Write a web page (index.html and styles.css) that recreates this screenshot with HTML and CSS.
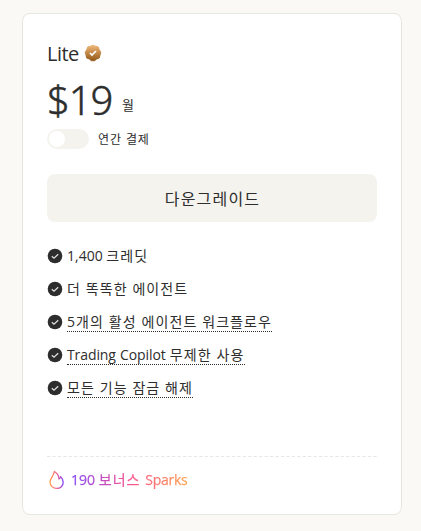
FILE: index.html
```html
<!DOCTYPE html>
<html lang="ko">
<head>
<meta charset="utf-8">
<title>Lite</title>
<link rel="stylesheet" href="styles.css">
</head>
<body>
<svg width="0" height="0" class="defs" aria-hidden="true">
  <defs>
    <linearGradient id="bronze" x1="0" y1="0" x2="0" y2="1"><stop offset="0" stop-color="#f0b777"/><stop offset="1" stop-color="#925817"/></linearGradient>
    <linearGradient id="flame" x1="0" y1="0" x2="1" y2="0"><stop offset="0" stop-color="#ffa04d"/><stop offset=".5" stop-color="#f85c88"/><stop offset="1" stop-color="#8348f6"/></linearGradient>
    <symbol id="check" viewBox="0 0 16 16"><circle cx="8" cy="8" r="7.3" fill="#2d2d2d"/><path d="M4.8 8.2 7 10.2 11.2 6.2" fill="none" stroke="#e4e4e4" stroke-width="1.2"/></symbol>
  </defs>
</svg>
<main class="card">
  <header class="plan">
    <h1 class="name">Lite</h1>
    <svg class="badge" viewBox="0 0 18 18"><path fill="url(#bronze)" stroke="url(#bronze)" stroke-width="1" stroke-linejoin="round" d="M9 1.2 11.5 2.2 14.3 2.9 15.3 5.8 16.8 8.3 16 11 15.4 13.9 12.7 15 10.5 16.7 7.5 16.7 5.3 15 2.6 13.9 2 11 1.2 8.3 2.7 5.8 3.7 2.9 6.5 2.2Z"/><path d="M6 9 8 11 12 7" fill="none" stroke="#fff" stroke-width="1.7"/></svg>
  </header>
  <div class="price"><span class="amount">$19</span><span class="period">월</span></div>
  <div class="billing"><span class="toggle"></span><span class="yearly">연간 결제</span></div>
  <button class="action">다운그레이드</button>
  <ul class="features">
    <li><svg class="tick"><use href="#check"/></svg><span class="text">1,400 <span class="ko">크레딧</span></span></li>
    <li><svg class="tick"><use href="#check"/></svg><span class="text ko">더 똑똑한 에이전트</span></li>
    <li><svg class="tick"><use href="#check"/></svg><span class="text ko hint">5개의 활성 에이전트 워크플로우</span></li>
    <li><svg class="tick"><use href="#check"/></svg><span class="text hint"><span class="latin">Trading Copilot </span><span class="ko">무제한 사용</span></span></li>
    <li><svg class="tick"><use href="#check"/></svg><span class="text ko hint">모든 기능 잠금 해제</span></li>
  </ul>
  <svg class="divider" viewBox="0 0 330 1"><path d="M0 .5H330" stroke="#e6e6e4" stroke-dasharray="3.2 2.24"/></svg>
  <footer class="bonus">
    <svg class="fire" viewBox="0 0 18 20"><path d="M6.3 1.5C9.2 3 10.8 5.4 11 9 12 8.6 12.5 7.8 12.6 6.6 14.3 8.3 15.2 10.2 15.2 12.2 15.2 15.9 12.4 18.4 8.8 18.4 5 18.4 2 15.8 2 12 2 8.5 5.6 6.5 6.3 1.5Z" fill="none" stroke="url(#flame)" stroke-width="1.3" stroke-linejoin="round"/></svg>
    <span class="sparks">190 <span class="ko">보너스 </span><span class="name-en">Sparks</span></span>
  </footer>
</main>
</body>
</html>
```
FILE: styles.css
```css
* { box-sizing: border-box; }
body {
  margin: 0;
  padding: 13px 19px 16px 22px;
  height: 531px;
  overflow: hidden;
  background: #faf9f5;
  color: #2d2d2d;
  font-family: "Open Sans", "Noto Sans CJK KR", sans-serif;
  font-size: 14px;
  white-space: nowrap;
}
.defs { position: absolute; }
.card {
  height: 502px;
  padding: 27px 24px 0;
  border: 1px solid #e6e6e0;
  border-radius: 8px;
  background: #fff;
}
.plan { display: flex; height: 26px; align-items: center; gap: 6px; }
.name { width: 31px; margin: 0; font-size: 20px; font-weight: 400; line-height: 26px; letter-spacing: -.5px; }
.badge { width: 18px; height: 18px; margin-top: -2px; }
.price { display: flex; height: 60px; line-height: 66px; }
.amount {
  width: 75px;
  font-family: "Noto Sans", sans-serif;
  font-size: 40px;
  font-weight: 300;
  letter-spacing: -1.1px;
  -webkit-text-stroke: .5px #2d2d2d;
}
.period { padding-top: 28px; font-size: 13px; line-height: 20px; }
.billing { display: flex; height: 20px; margin-top: 2px; align-items: center; gap: 9px; }
.toggle { width: 42px; height: 20px; padding: 2px; border-radius: 10px; background: #f4f3ee; }
.toggle::before { content: ""; display: block; width: 16px; height: 16px; border-radius: 50%; background: #fff; }
.yearly { margin-top: 1px; font-size: 12px; line-height: 20px; letter-spacing: .9px; }
.action {
  display: block;
  width: 330px;
  height: 48px;
  margin-top: 25px;
  padding: 0 0 0 1px;
  border: 0;
  border-radius: 8px;
  background: #f4f3ee;
  color: inherit;
  font: 16px/46px "Noto Sans CJK KR", sans-serif;
  letter-spacing: 1.2px;
}
.features { height: 165px; margin: 17px 0 0; padding: 0; list-style: none; }
.features li { display: flex; height: 33px; align-items: center; gap: 4px; }
.tick { width: 16px; height: 16px; }
.text { height: 20px; line-height: 20px; }
.ko { letter-spacing: 1.1px; }
.latin { letter-spacing: -.1px; word-spacing: .7px; }
.hint { border-bottom: 1px dotted #2d2d2d; }
.divider { display: block; width: 330px; height: 1px; margin-top: 52px; }
.bonus { display: flex; height: 45px; align-items: center; gap: 5px; }
.fire { width: 18px; height: 20px; margin-left: 1px; }
.sparks {
  margin-top: -2px;
  background: linear-gradient(90deg, #8348f6, #f85292 50%, #ffa04d);
  background-clip: text;
  -webkit-background-clip: text;
  color: transparent;
  -webkit-text-stroke: .25px transparent;
}
.name-en { letter-spacing: -.3px; }
```
